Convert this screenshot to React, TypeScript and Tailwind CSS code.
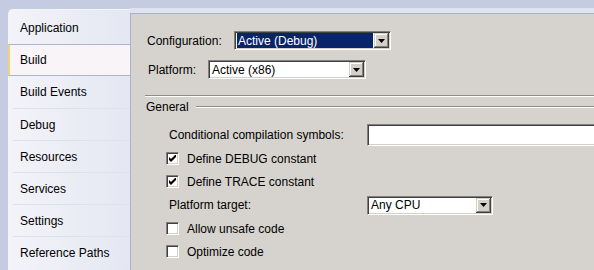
const tabs = [
  "Application",
  "Build",
  "Build Events",
  "Debug",
  "Resources",
  "Services",
  "Settings",
  "Reference Paths",
];

function Arrow() {
  return (
    <svg width="7" height="4" viewBox="0 0 7 4">
      <path d="M0 0h7L3.5 4z" fill="#000" />
    </svg>
  );
}

function Combo({
  width,
  text,
  selected,
}: {
  width: number;
  text: string;
  selected?: boolean;
}) {
  return (
    <div
      style={{ width }}
      className="flex h-[19px] border border-t-[#808080] border-l-[#808080] border-b-white border-r-white bg-white p-px shadow-[inset_1px_1px_0_#404040,inset_-1px_-1px_0_#d4d0c8]"
    >
      <div className="flex flex-1 items-center pl-px">
        <span
          className={
            selected
              ? "flex h-full flex-1 items-center bg-[#0a246a] px-px text-white"
              : "flex h-full flex-1 items-center px-px text-black"
          }
        >
          {text}
        </span>
      </div>
      <div className="ml-px flex w-[15px] items-center justify-center bg-[#d4d0c8] shadow-[inset_-1px_-1px_0_#404040,inset_1px_1px_0_#d4d0c8,inset_-2px_-2px_0_#808080,inset_2px_2px_0_#ffffff]">
        <Arrow />
      </div>
    </div>
  );
}

function Check({ checked, label }: { checked?: boolean; label: string }) {
  return (
    <div className="flex h-[23px] items-center gap-[8px] pl-[35px]">
      <div className="flex h-[13px] w-[13px] items-center justify-center border border-t-[#808080] border-l-[#808080] border-b-white border-r-white bg-white shadow-[inset_1px_1px_0_#404040,inset_-1px_-1px_0_#d4d0c8]">
        {checked && (
          <svg width="7" height="7" viewBox="0 0 7 7">
            <path d="M0 2v3l2 2 5-5V-1L2 4z" fill="#000" />
          </svg>
        )}
      </div>
      <span>{label}</span>
    </div>
  );
}

export default function App() {
  return (
    <div
      className="flex h-[270px] w-[594px] overflow-hidden bg-[#c5cce1] text-[12px] leading-none text-black"
      style={{ fontFamily: '"Liberation Sans", Arial, sans-serif' }}
    >
      <div className="w-[130px] shrink-0 pl-[8px] pt-[9px]">
        <div className="h-full rounded-tl-[5px] border-l border-t border-[#f4f5fb] bg-gradient-to-r from-[#f3f3f9] to-[#e4e7f2] pt-[2px]">
          {tabs.map((t, i) =>
            t === "Build" ? (
              <div
                key={t}
                className="-ml-px mr-[-1px] flex h-[32px] items-center border-y border-l-2 border-y-[#aab4cf] border-l-[#f2d37a] bg-[#f8f4f8] pl-[10px]"
              >
                {t}
              </div>
            ) : (
              <div
                key={t}
                className={
                  i === 0 || i === 2
                    ? "flex h-[32px] items-center pl-[11px]"
                    : "ml-[4px] flex h-[32px] items-center border-t border-[#dde1ee] pl-[7px]"
                }
              >
                {t}
              </div>
            ),
          )}
        </div>
      </div>

      <div className="flex flex-1 flex-col">
        <div className="h-[8px]" />
        <div className="h-[5px] bg-[#dfe3f0]" />
        <div className="flex-1 border-l border-t border-[#a9b2cc] bg-[#d6d3ce]">
          <div className="mt-[17px] flex items-center pl-[16px]">
            <span className="w-[87px]">Configuration:</span>
            <Combo width={157} text="Active (Debug)" selected />
          </div>
          <div className="mt-[10px] flex items-center pl-[17px]">
            <span className="w-[60px]">Platform:</span>
            <Combo width={158} text="Active (x86)" />
          </div>

          <div className="ml-[14px] mt-[16px] h-[2px] border-t border-b border-t-[#8e8c88] border-b-white" />

          <div className="mt-[3px] flex h-[14px] items-center pl-[15px]">
            <span>General</span>
            <div className="ml-[7px] h-[2px] flex-1 border-t border-b border-t-[#8e8c88] border-b-white" />
          </div>

          <div className="mt-[10px] flex h-[22px] items-center pl-[38px]">
            <span className="w-[198px]">Conditional compilation symbols:</span>
            <div className="h-[22px] flex-1 border border-r-0 border-t-[#808080] border-l-[#808080] border-b-white bg-white shadow-[inset_1px_1px_0_#404040,inset_0_-1px_0_#d4d0c8]" />
          </div>

          <div className="mt-px">
            <Check checked label="Define DEBUG constant" />
            <Check checked label="Define TRACE constant" />
            <div className="flex h-[24px] items-center pl-[38px]">
              <span className="w-[198px]">Platform target:</span>
              <Combo width={126} text="Any CPU" />
            </div>
            <Check label="Allow unsafe code" />
            <Check label="Optimize code" />
          </div>
        </div>
      </div>
    </div>
  );
}
